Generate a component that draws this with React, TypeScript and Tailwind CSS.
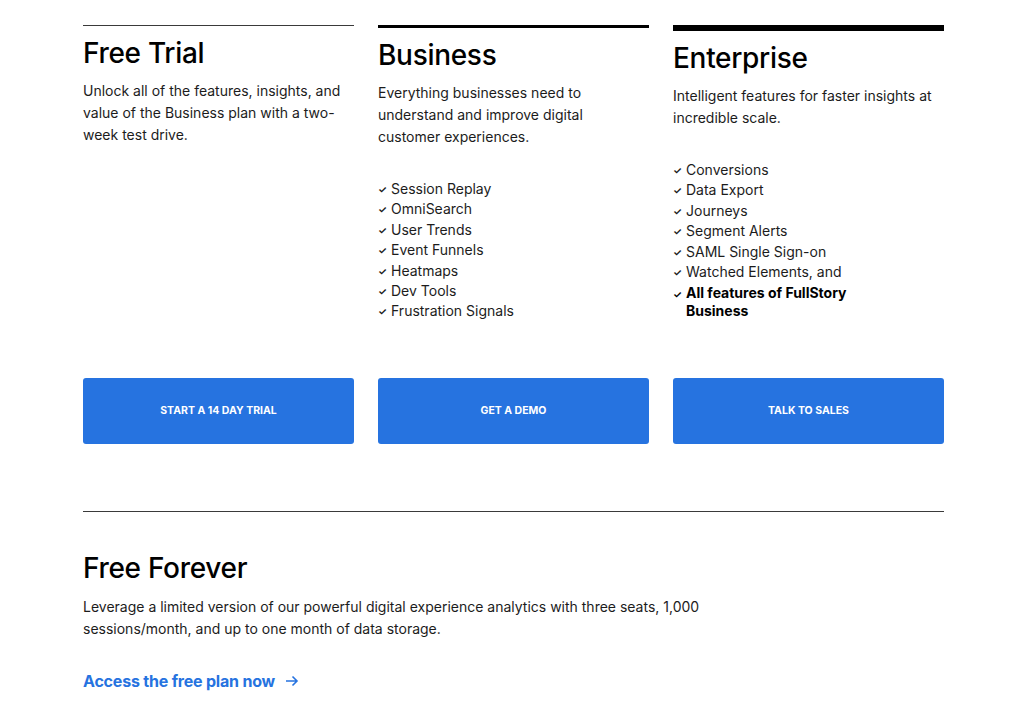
import React from 'react'

type Plan = {
  title: string
  desc: string
  rule: string
  features: string[]
  bold?: string
  cta: string
}

const plans: Plan[] = [
  {
    title: 'Free Trial',
    desc: 'Unlock all of the features, insights, and value of the Business plan with a two-week test drive.',
    rule: 'border-t border-[#3a3a3a]',
    features: [],
    cta: 'Start a 14 day trial',
  },
  {
    title: 'Business',
    desc: 'Everything businesses need to understand and improve digital customer experiences.',
    rule: 'border-t-[3px] border-black',
    features: ['Session Replay', 'OmniSearch', 'User Trends', 'Event Funnels', 'Heatmaps', 'Dev Tools', 'Frustration Signals'],
    cta: 'Get a demo',
  },
  {
    title: 'Enterprise',
    desc: 'Intelligent features for faster insights at incredible scale.',
    rule: 'border-t-[6px] border-black',
    features: ['Conversions', 'Data Export', 'Journeys', 'Segment Alerts', 'SAML Single Sign-on', 'Watched Elements, and'],
    bold: 'All features of FullStory Business',
    cta: 'Talk to sales',
  },
]

function Check() {
  return <span className="w-[13px] shrink-0 text-[10px] font-bold leading-[20px]">✓</span>
}

export default function App() {
  return (
    <div className="min-h-[701px] bg-white text-[#1c1c1c] font-['Inter','Noto_Sans',sans-serif]">
      <div className="w-[861px] ml-[83px] pt-[25px]">
        <div className="grid grid-cols-3 gap-x-[24px]">
          {plans.map((p) => (
            <div key={p.title} className={`flex flex-col ${p.rule}`}>
              <h2 className="mt-[9px] text-[28px] font-medium leading-[36px] tracking-[-0.3px] text-black">{p.title}</h2>
              <p className="mt-[9px] max-w-[264px] text-[14px] leading-[22px]">{p.desc}</p>
              {(p.features.length > 0 || p.bold) && (
                <ul className="mt-[31px] text-[14px] leading-[20.4px]">
                  {p.features.map((f) => (
                    <li key={f} className="flex">
                      <Check />
                      <span>{f}</span>
                    </li>
                  ))}
                  {p.bold && (
                    <li className="flex font-bold leading-[18px] mt-[2px] text-black">
                      <Check />
                      <span className="w-[170px]">{p.bold}</span>
                    </li>
                  )}
                </ul>
              )}
              <div className="mt-auto pt-[56px]" />
            </div>
          ))}
        </div>
        <div className="grid grid-cols-3 gap-x-[24px]">
          {plans.map((p) => (
            <button
              key={p.cta}
              className="h-[66px] rounded-[3px] bg-[#2673e0] text-white text-[10.5px] font-bold uppercase"
            >
              {p.cta}
            </button>
          ))}
        </div>
        <div className="mt-[67px] border-t border-[#3a3a3a]" />
        <h2 className="mt-[38px] text-[28px] font-medium leading-[36px] tracking-[-0.3px] text-black">Free Forever</h2>
        <p className="mt-[10px] max-w-[640px] text-[14px] leading-[22px]">
          Leverage a limited version of our powerful digital experience analytics with three seats, 1,000 sessions/month, and up to one month of data storage.
        </p>
        <a href="#" className="mt-[29px] inline-flex items-center gap-[10px] text-[16px] font-bold tracking-[-0.2px] text-[#2673e0]">
          Access the free plan now
          <svg className="w-[14px] h-[14px]" viewBox="0 0 14 14" fill="none" stroke="currentColor" strokeWidth="1.6">
            <path d="M1 7h11M7.5 2.5 12 7l-4.5 4.5" />
          </svg>
        </a>
      </div>
    </div>
  )
}
